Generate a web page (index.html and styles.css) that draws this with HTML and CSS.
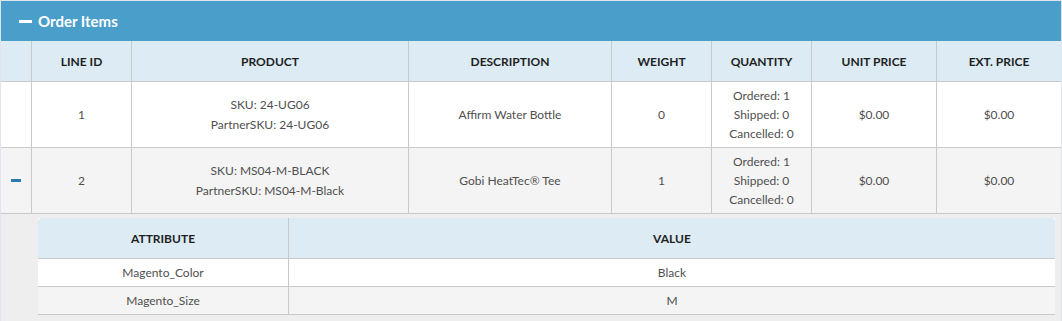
FILE: index.html
```html
<!DOCTYPE html>
<html>
<head>
<meta charset="utf-8">
<link rel="stylesheet" href="styles.css">
</head>
<body>
<div class="panel">
  <div class="panel-head"><span class="minus"></span><span class="title">Order Items</span></div>
  <div class="grid items">
    <div class="cell th"></div>
    <div class="cell th">LINE ID</div>
    <div class="cell th">PRODUCT</div>
    <div class="cell th">DESCRIPTION</div>
    <div class="cell th">WEIGHT</div>
    <div class="cell th">QUANTITY</div>
    <div class="cell th">UNIT PRICE</div>
    <div class="cell th last">EXT. PRICE</div>

    <div class="cell td"></div>
    <div class="cell td">1</div>
    <div class="cell td"><div>SKU: 24-UG06</div><div>PartnerSKU: 24-UG06</div></div>
    <div class="cell td">Affirm Water Bottle</div>
    <div class="cell td">0</div>
    <div class="cell td qty"><div>Ordered: 1</div><div>Shipped: 0</div><div>Cancelled: 0</div></div>
    <div class="cell td">$0.00</div>
    <div class="cell td last">$0.00</div>

    <div class="cell td alt"><span class="row-minus"></span></div>
    <div class="cell td alt">2</div>
    <div class="cell td alt"><div>SKU: MS04-M-BLACK</div><div>PartnerSKU: MS04-M-Black</div></div>
    <div class="cell td alt">Gobi HeatTec® Tee</div>
    <div class="cell td alt">1</div>
    <div class="cell td alt qty"><div>Ordered: 1</div><div>Shipped: 0</div><div>Cancelled: 0</div></div>
    <div class="cell td alt">$0.00</div>
    <div class="cell td alt last">$0.00</div>
  </div>
  <div class="detail">
    <div class="grid attrs">
      <div class="cell th first-h">ATTRIBUTE</div>
      <div class="cell th last last-h">VALUE</div>
      <div class="cell sd">Magento_Color</div>
      <div class="cell sd last">Black</div>
      <div class="cell sd alt">Magento_Size</div>
      <div class="cell sd alt last">M</div>
    </div>
  </div>
</div>
</body>
</html>
```

FILE: styles.css
```css
* { box-sizing: border-box; }
html, body { margin: 0; padding: 0; background: #fff; }
body {
  font-family: Lato, "Open Sans", "Liberation Sans", sans-serif;
  font-size: 12px;
  color: #4f4f4f;
}
.panel {
  width: 1062px;
  border: 1px solid #dfe5ea;
  border-bottom: none;
  background: #eeeeee;
}
.panel-head {
  height: 40px;
  background: #4a9eca;
  display: flex;
  align-items: center;
  padding-left: 18px;
  color: #fff;
}
.minus {
  display: inline-block;
  width: 13px;
  height: 3px;
  background: #fff;
  margin-right: 6px;
}
.title {
  font-weight: 700;
  font-size: 15px;
  line-height: 16px;
}
.grid { display: grid; }
.items {
  grid-template-columns: 31px 100px 277px 203px 100px 100px 125px 124px;
  background: #fff;
}
.cell {
  display: flex;
  flex-direction: column;
  align-items: center;
  justify-content: center;
  text-align: center;
  border-right: 1px solid #c9c9c9;
  border-bottom: 1px solid #c9c9c9;
}
.cell.last { border-right: none; }
.th {
  height: 41px;
  background: #dcebf4;
  color: #1f1f1f;
  font-weight: 700;
  font-size: 12px;
}
.td {
  height: 66px;
  background: #fff;
  line-height: 20px;
}
.td.qty { line-height: 19px; }
.td.alt { background: #f4f4f4; }
.row-minus {
  display: block;
  width: 10px;
  height: 3px;
  background: #2b7bb3;
}
.detail {
  padding: 4px 6px 6px 37px;
}
.attrs {
  grid-template-columns: 251px 766px;
  background: #fff;
}
.first-h { border-top-left-radius: 4px; }
.last-h { border-top-right-radius: 4px; }
.sd {
  height: 28px;
  background: #fff;
}
.sd.alt { background: #f4f4f4; }
```
